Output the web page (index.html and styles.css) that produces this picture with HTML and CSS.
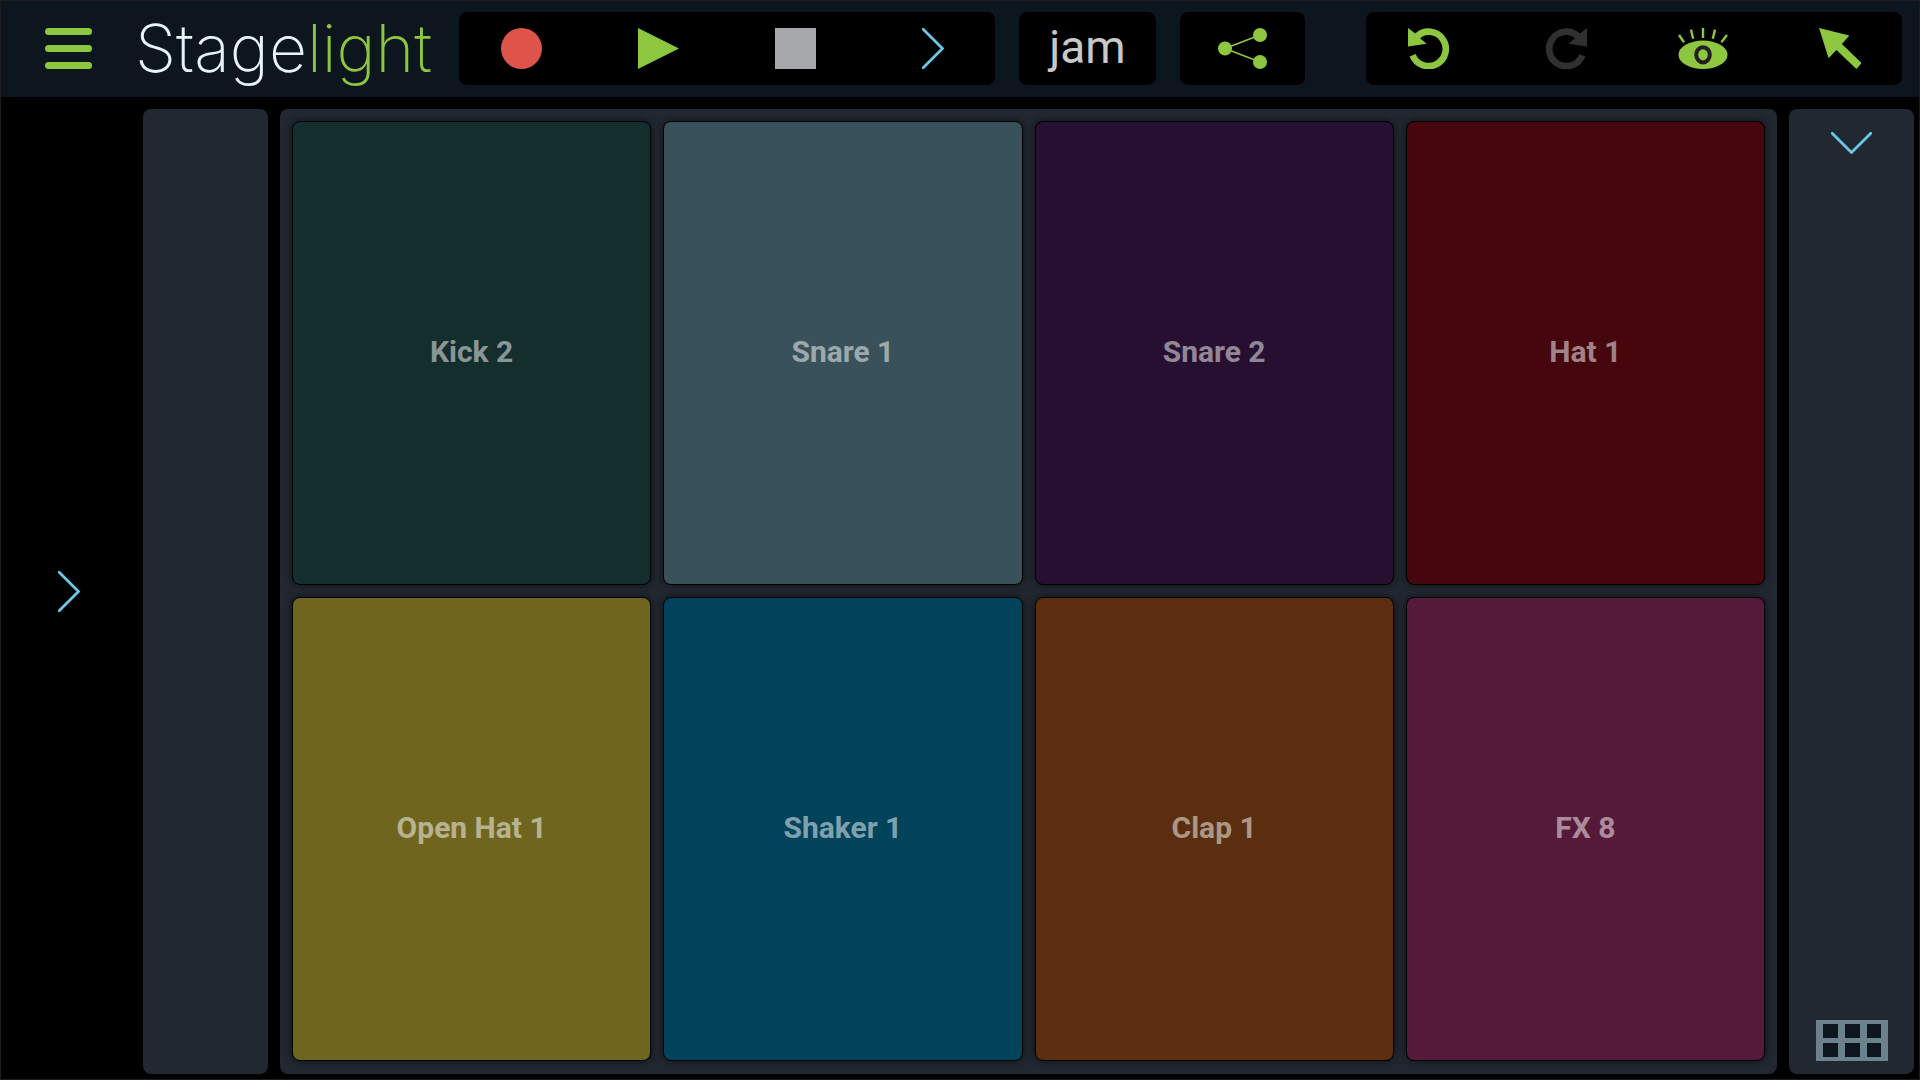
FILE: index.html
```html
<!DOCTYPE html>
<html lang="en">
<head>
<meta charset="utf-8">
<title>Stagelight</title>
<link rel="stylesheet" href="styles.css">
</head>
<body>

<header class="toolbar">
	<button class="btn" type="button" aria-label="Menu">
		<svg width="47" height="41" viewBox="0 0 47 41" fill="#8dc63f">
			<rect width="47" height="7" rx="3.5"/>
			<rect y="17" width="47" height="7" rx="3.5"/>
			<rect y="34" width="47" height="7" rx="3.5"/>
		</svg>
	</button>
	<h1 class="logo">Stage<span class="light">light</span></h1>

	<div class="group">
		<button class="btn" type="button" aria-label="Record">
			<svg width="41" height="41" viewBox="0 0 41 41"><circle cx="20.5" cy="20.5" r="20.5" fill="#df544a"/></svg>
		</button>
		<button class="btn" type="button" aria-label="Play">
			<svg width="41" height="41" viewBox="0 0 41 41"><path d="M0 0L41 20.5L0 41Z" fill="#8dc63f"/></svg>
		</button>
		<button class="btn" type="button" aria-label="Stop">
			<svg width="41" height="41" viewBox="0 0 41 41"><rect width="41" height="41" fill="#a7a8ab"/></svg>
		</button>
		<button class="btn" type="button" aria-label="More transport controls">
			<svg class="chevron" width="22" height="41" viewBox="0 0 22 41"><path d="M1.2 1.2L20.5 20.5L1.2 39.8"/></svg>
		</button>
	</div>

	<div class="group">
		<button class="btn jam" type="button">jam</button>
	</div>

	<div class="group">
		<button class="btn" type="button" aria-label="Share">
			<svg width="49" height="41" viewBox="0 0 49 41" fill="#8dc63f">
				<path d="M42 7L7 20.5L42 34" fill="none" stroke="#8dc63f" stroke-width="1.6"/>
				<circle cx="7" cy="20.5" r="7"/>
				<circle cx="42" cy="7" r="7"/>
				<circle cx="42" cy="34" r="7"/>
			</svg>
		</button>
	</div>

	<div class="group last">
		<button class="btn" type="button" aria-label="Undo">
			<svg width="42" height="41" viewBox="0 0 42 41">
				<path d="M4.6 27.2A17.2 17.2 0 1 0 9.2 8" fill="none" stroke="#8dc63f" stroke-width="6.6"/>
				<path d="M0 0L0 18.4L18.6 15.7L12 10.2L14.6 8.4L7.2 5.6Z" fill="#8dc63f"/>
			</svg>
		</button>
		<button class="btn" type="button" aria-label="Redo" disabled>
			<svg width="42" height="41" viewBox="0 0 42 41">
				<path d="M37.4 27.2A17.2 17.2 0 1 1 32.8 8" fill="none" stroke="#303030" stroke-width="6.6"/>
				<path d="M42 0L42 18.4L23.4 15.7L30 10.2L27.4 8.4L34.8 5.6Z" fill="#303030"/>
			</svg>
		</button>
		<button class="btn" type="button" aria-label="View">
			<svg width="50" height="41" viewBox="0 0 50 41">
				<ellipse cx="25" cy="26.8" rx="24.5" ry="14.2" fill="#8dc63f"/>
				<ellipse cx="25" cy="26.8" rx="6.8" ry="7.6" fill="none" stroke="#231f20" stroke-width="4"/>
				<path d="M1 7L6 14.2M13 1.6L15.2 10.8M25 0V10M37 1.6L34.8 10.8M49 7L43.4 14.2" stroke="#8dc63f" stroke-width="2.4"/>
			</svg>
		</button>
		<button class="btn" type="button" aria-label="Select">
			<svg width="42" height="41" viewBox="0 0 42 41"><path d="M0 0L30.4 7.6L22.9 16.1L42.6 35L37.4 40.9L17.4 22L9.6 30.2Z" fill="#8dc63f"/></svg>
		</button>
	</div>
</header>

<main class="stage">
	<button class="btn" type="button" aria-label="Open browser">
		<svg class="chevron" width="22" height="41" viewBox="0 0 22 41"><path d="M1.2 1.2L20.5 20.5L1.2 39.8"/></svg>
	</button>

	<div class="panel side"></div>

	<div class="panel pads">
		<button class="pad kick" type="button">Kick 2</button>
		<button class="pad snare1" type="button">Snare 1</button>
		<button class="pad snare2" type="button">Snare 2</button>
		<button class="pad hat" type="button">Hat 1</button>
		<button class="pad openhat" type="button">Open Hat 1</button>
		<button class="pad shaker" type="button">Shaker 1</button>
		<button class="pad clap" type="button">Clap 1</button>
		<button class="pad fx" type="button">FX 8</button>
	</div>

	<div class="panel side">
		<button class="btn" type="button" aria-label="Show options">
			<svg class="chevron" width="41" height="22" viewBox="0 0 41 22"><path d="M1.2 1.2L20.5 20.5L39.8 1.2"/></svg>
		</button>
		<button class="btn" type="button" aria-label="Pad layout">
			<svg width="72" height="41" viewBox="0 0 72 41">
				<rect width="72" height="41" fill="#6b828c"/>
				<path d="M7 4h15v14h-15zM29 4h15v14h-15zM51 4h14v14h-14zM7 23h15v14h-15zM29 23h15v14h-15zM51 23h14v14h-14z" fill="#0d151f"/>
			</svg>
		</button>
	</div>
</main>

</body>
</html>
```
FILE: styles.css
```css
* { 
	box-sizing: border-box;
}
body {
	display: flex;
	flex-direction: column;
	height: 100vh;
	margin: 0;
	border: 1px solid #1c1c1c;
	background: #000;
	font-family: Roboto, sans-serif;
}
button {
	margin: 0;
	padding: 0;
	border: 0;
	background: none;
	color: inherit;
	font: inherit;
}
svg {
	display: block;
}

/* top bar */
.toolbar {
	display: flex;
	align-items: center;
	flex: none;
	height: 96px;
	padding: 0 17px 1px 5px;
	background: #0d151f;
}
.btn {
	display: flex;
	align-items: center;
	justify-content: center;
	flex: none;
	width: 125px;
	height: 73px;
}
.logo {
	width: 312px;
	margin: 0 12px 0 4px;
	padding-bottom: 2px;
	color: #e8f4fa;
	font-family: Inter, sans-serif;
	font-size: 66px;
	font-weight: 200;
	line-height: 72px;
	white-space: nowrap;
}
.light {
	color: #8dc63f;
}
.group {
	display: flex;
	gap: 12px;
	margin-right: 24px;
	border-radius: 8px;
	background: #000;
}
.group.last {
	margin: 0 0 0 auto;
}
.jam {
	width: 137px;
	padding-bottom: 4px;
	color: #c8c8c8;
	font-size: 46px;
}
.chevron {
	fill: none;
	stroke: #6dc5e4;
	stroke-width: 2.8;
	stroke-linecap: round;
}

/* instrument area */
.stage {
	display: flex;
	align-items: center;
	gap: 12px;
	flex: 1;
	min-height: 0;
	padding: 12px 5px 5px;
}
.panel {
	align-self: stretch;
	border-radius: 8px;
	background: #222831;
}
.side {
	display: flex;
	flex-direction: column;
	justify-content: space-between;
	flex: none;
	width: 125px;
}
.side .btn {
	height: 68px;
}
.pads {
	display: grid;
	grid-template-columns: repeat(4, 1fr);
	grid-template-rows: repeat(2, 1fr);
	gap: 12px;
	flex: 1;
	padding: 12px 12px 13px;
}
.pad {
	padding-bottom: 3px;
	border: 1px solid #000;
	border-radius: 8px;
	box-shadow: 0 0 8px rgba(0, 0, 0, .6);
	color: rgba(255, 255, 255, .5);
	font-size: 30px;
	font-weight: 700;
}
.kick { background: #142d2d; }
.snare1 { background: #39515a; }
.snare2 { background: #260f30; }
.hat { background: #46060d; }
.openhat { background: #70651f; }
.shaker { background: #00435b; }
.clap { background: #5a2e0e; }
.fx { background: #551a39; }
```
